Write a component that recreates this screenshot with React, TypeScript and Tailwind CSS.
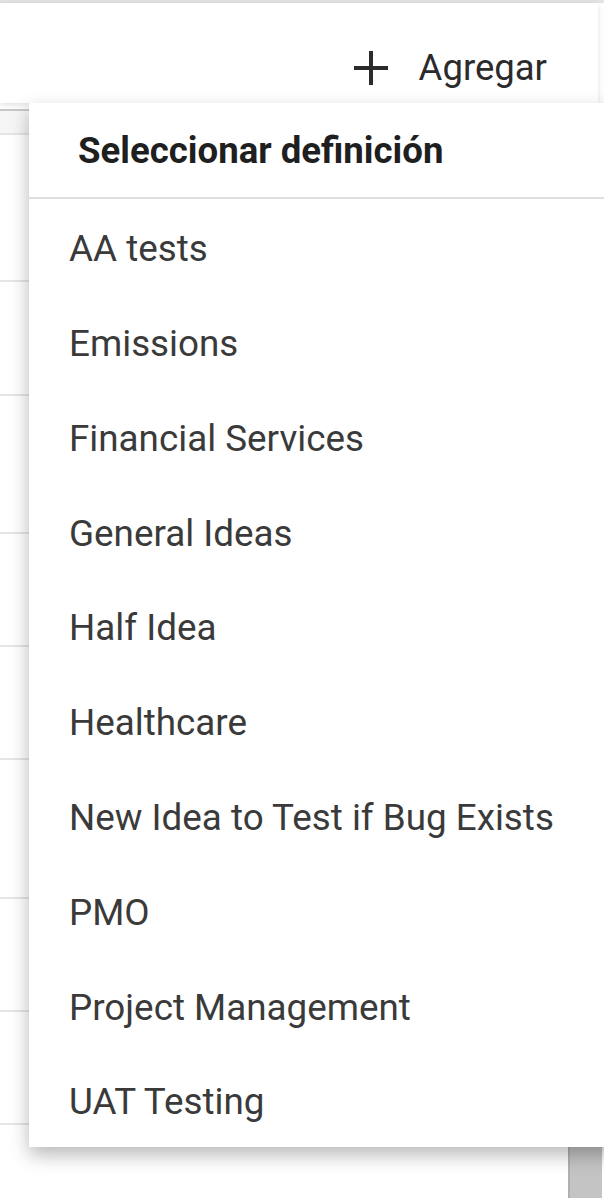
import React from "react";

const items = [
  "AA tests",
  "Emissions",
  "Financial Services",
  "General Ideas",
  "Half Idea",
  "Healthcare",
  "New Idea to Test if Bug Exists",
  "PMO",
  "Project Management",
  "UAT Testing",
];

export default function App() {
  return (
    <div className="relative w-[604px] h-[1198px] overflow-hidden bg-white font-['Roboto',sans-serif]">
      <div className="h-[3px] bg-[#e2e2e2]" />
      <div className="relative z-10 h-[100px] w-[598px] bg-white shadow-[0_2px_6px_rgba(0,0,0,0.12)] flex items-center justify-end pt-[30px] pr-[51px]">
        <button className="flex items-center gap-[30px] text-[36.5px] leading-none text-[#2b2b2b]">
          <svg width="36" height="36" viewBox="0 0 36 36" className="block">
            <path d="M18 1v34M1 18h34" stroke="#2b2b2b" strokeWidth="4" fill="none" />
          </svg>
          <span>Agregar</span>
        </button>
      </div>

      <div className="flex flex-col">
        <div className="h-[6px]" />
        <div className="h-[24px] border-t-2 border-[#c8c8c8] bg-[#f6f6f6]" />
        <div className="h-[147px] border-t-2 border-[#e6e6e6]" />
        <div className="h-[114px] border-t-2 border-[#e6e6e6]" />
        <div className="h-[138px] border-t-2 border-[#e6e6e6]" />
        <div className="h-[113px] border-t-2 border-[#e6e6e6]" />
        <div className="h-[113px] border-t-2 border-[#e6e6e6]" />
        <div className="h-[139px] border-t-2 border-[#e6e6e6]" />
        <div className="h-[113px] border-t-2 border-[#e6e6e6]" />
        <div className="h-[113px] border-t-2 border-[#e6e6e6]" />
        <div className="h-[80px] border-t-2 border-[#e6e6e6]" />
      </div>

      <div className="absolute left-[568px] top-[1147px] w-[34px] h-[60px] bg-[#c4c4c4] border-l-2 border-[#b0b0b0]" />

      <div className="absolute z-20 left-[29px] top-[103px] w-[600px] bg-white shadow-[0_8px_18px_rgba(0,0,0,0.28)]">
        <div className="h-[94px] flex items-center pl-[49px] pt-[2px] text-[36.6px] font-bold text-[#1f1f1f]">
          Seleccionar definición
        </div>
        <div className="h-[2px] bg-[#dedede]" />
        <div className="flex flex-col">
          {items.map((t) => (
            <div key={t} className="h-[94.8px] flex items-center pl-[40px] pt-[5px] text-[36.8px] text-[#3a3a3a]">
              {t}
            </div>
          ))}
        </div>
      </div>
    </div>
  );
}
